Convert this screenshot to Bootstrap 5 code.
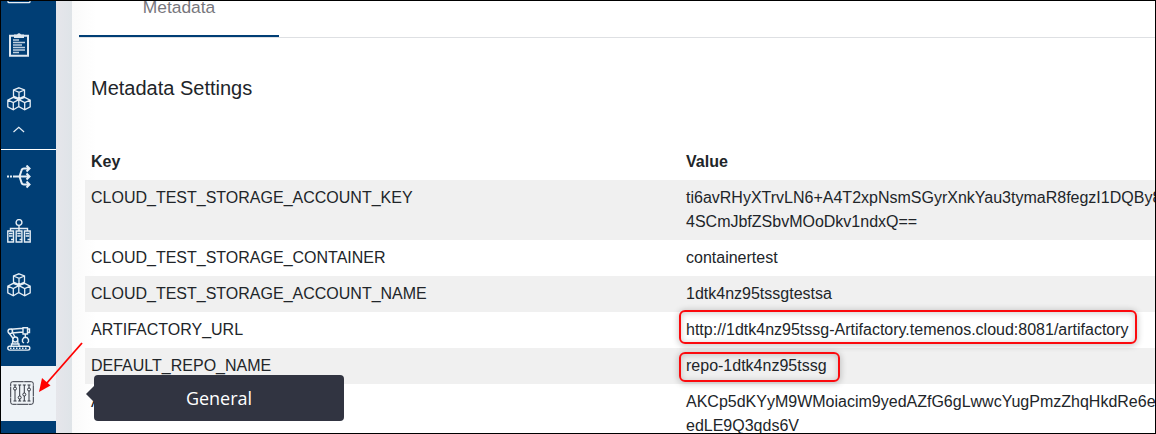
<!DOCTYPE html>
<html lang="en">
<head>
<meta charset="utf-8">
<title>Metadata Settings</title>
<link href="https://cdn.jsdelivr.net/npm/bootstrap@5.3.0/dist/css/bootstrap.min.css" rel="stylesheet">
<style>
body{font-family:"Liberation Sans",Arial,sans-serif;font-size:16px;color:#212529;background:#fff}
.app-frame{width:1156px;height:434px;border:1px solid #000}
.side-bar{width:55px;background:#003e75;color:#e6eef5}
.side-bar svg{display:block;fill:none;stroke:currentColor;margin-left:6px}
.side-item{height:54px;flex:none}
.side-item.cut{height:17px;align-items:flex-start!important}
.side-caret{height:23px;flex:none}
.side-rule{height:1px;background:#fff;flex:none}
.side-item.current{height:55px;background:#eff3f7;color:#333640}
.side-item.current svg{margin:-2px 0 0 9px}
.gutter{width:16px;background:linear-gradient(90deg,#e6e6eb,#dfe4e8)}
.main-pane{min-width:0;padding-left:7px;background:linear-gradient(90deg,#fafafa,#fff 24px)}
.tab-strip{height:37px;border-bottom:1px solid #dee0e3;flex:none}
.tab-on{width:200px;height:36px;border-bottom:2px solid #003e75;color:#77777d;font-size:17.4px;line-height:13px}
.pane-body{padding-left:6px}
.pane-title{font-size:20px;line-height:24px;font-weight:400;margin:0 0 0 6px;padding-top:38px}
.kv-table{width:1190px;table-layout:fixed;margin-top:44px;--bs-table-striped-bg:#f0f0f0}
.kv-table>:not(caption)>*>*{padding:6px;border:0;line-height:24px;color:#212529!important}
.kv-table td{white-space:nowrap}
.marked{border:2px solid #fb0a0e;border-radius:6px;box-shadow:0 1px 6px 1px #0003,inset 0 1px 6px #0003;left:-7px}
.mark-url{top:-8px;height:34px;right:-8px}
.mark-repo{top:-2px;height:30px;right:-13px}
.tip{left:93px;top:374px;width:250px;height:46px;background:#313441;color:#fff;font:18px/46px "Open Sans","Noto Sans",sans-serif;border-radius:4px;z-index:3}
.tip:before{content:"";position:absolute;left:-8px;top:11px;border:8px solid transparent;border-right-color:#313441;border-left:0}
.pointer-arrow{left:0;top:0;z-index:4;pointer-events:none}
</style>
</head>
<body class="overflow-hidden">
<svg class="d-none">
<symbol id="cubes" viewBox="0 0 24 24"><path d="M12 .8 17.500 3v6L12 11.500 6.500 9V3ZM6.500 3 12 5.300 17.500 3M12 5.300v6M6.300 10.300 11.800 12.700v6.800L6.300 22.800.8 19.800v-6.700ZM.8 13.100l5.500 2.400 5.500-2.800M6.300 15.500v7M17.700 10.300l5.500 2.800v6.700l-5.500 3-5.900-3.300v-6.800ZM11.800 12.700l5.900 2.800 5.500-2.400M17.700 15.500v7"/></symbol>
</svg>
<div class="app-frame d-flex overflow-hidden position-relative">
  <nav class="side-bar d-flex flex-column flex-shrink-0">
    <div class="side-item cut d-flex"><svg width="24" height="3" stroke-width="1.200"><path d="M1 0v1q0 .6 1 .6h20q1 0 1-.6V0"/></svg></div>
    <div class="side-item d-flex align-items-center"><svg width="24" height="24" viewBox="0 0 24 24"><path stroke="#dfe8f0" stroke-width="2" d="M3 2.800h18v20H3Z"/><path fill="#dfe8f0" stroke="none" d="M7 1.500h3q2-2.500 4 0h3V5H7Z"/><path stroke="#bfd0df" stroke-width="1.300" d="M6 7h6M6 9.500h12M6 12h9M6 14.500h12M6 17h12M6 19.500h6"/></svg></div>
    <div class="side-item d-flex align-items-center"><svg width="24" height="24" stroke-width="1.300"><use href="#cubes"/></svg></div>
    <div class="side-caret"><svg width="24" height="8" stroke-width="1.200"><path d="m6.500 6 5.300-4.700L17.100 6"/></svg></div>
    <div class="side-rule"></div>
    <div class="side-item d-flex align-items-center"><svg width="24" height="24" viewBox="0 0 24 24" stroke="#fff" stroke-width="2"><path d="M0 11.500h2M3 11.500h2M6 11.500h16M22 3.500h-5q-2 0-2.500 2l-2 6 2 6q.5 2 2.500 2h5M19.500 .5 22.500 3.500 19.500 6.500M19.500 8.500l3 3-3 3M19.500 16.500l3 3-3 3"/></svg></div>
    <div class="side-item d-flex align-items-center"><svg width="24" height="24" viewBox="0 0 24 24" stroke-width="1.400"><circle cx="12" cy="3.500" r="2.900"/><path d="M12 6.500V12M3.500 12V9.500h17V12M.8 12h5.700v11H.8ZM9.200 12h5.700v11H9.200ZM17.500 12h5.700v11h-5.700ZM2 14.500h3.500M2 17h3.500M10.300 14.500h3.500M10.300 17h3.500M18.700 14.500h3.500M18.700 17h3.500M4 20.500h2M12.500 20.500h2M20.500 20.500h2"/></svg></div>
    <div class="side-item d-flex align-items-center"><svg width="24" height="24" stroke-width="1.300"><use href="#cubes"/></svg></div>
    <div class="side-item d-flex align-items-center"><svg width="24" height="24" viewBox="0 0 24 24" stroke-width="1.400"><rect x=".8" y="19.300" width="22" height="3.800" rx="1.800"/><path stroke-dasharray="1.500 1.500" d="M3 21.200h18"/><path d="M4.500 19v-2h7.500v2M5.500 17l.2-4M11 17l-.3-3.500M2 6 6.500 12M5 4.500 8 10M4 2.300l12-1M5 6l11-1M16 .8h4.500V7H16ZM20.500 2h2v3.500h-2M18.300 7v3.500M15.500 15v-2.500l1.500-2h3l1.500 2V15M15.500 15l1.500 1M21.500 15 20 16"/><circle cx="3.300" cy="4.300" r="2.300"/><circle cx="8.300" cy="12.500" r="2.500"/></svg></div>
    <div class="side-item current d-flex align-items-center"><svg width="24" height="24" viewBox="0 0 24 24" stroke-width="1"><rect x=".7" y=".7" width="22.600" height="22.600" rx="2" stroke-dasharray="11 .5"/><path d="M5 4v2M5 9v11M9.700 4v11M9.700 18v2M14.300 4v8M14.300 15v5M19 4v3M19 10v10M3.500 4h3M8.200 4h3M12.800 4h3M17.500 4h3M3.500 20h3M8.200 20h3M12.800 20h3M17.500 20h3"/><circle cx="5" cy="7.600" r="1.500"/><circle cx="9.700" cy="16.500" r="1.500"/><circle cx="14.300" cy="13.500" r="1.500"/><circle cx="19" cy="8.500" r="1.500"/></svg></div>
  </nav>
  <div class="gutter flex-shrink-0"></div>
  <main class="main-pane flex-grow-1 overflow-hidden">
    <div class="tab-strip"><div class="tab-on text-center">Metadata</div></div>
    <div class="pane-body">
      <h5 class="pane-title">Metadata Settings</h5>
      <table class="table table-striped kv-table mb-0">
        <colgroup><col style="width:595px"><col></colgroup>
        <thead><tr><th>Key</th><th>Value</th></tr></thead>
        <tbody>
          <tr><td>CLOUD_TEST_STORAGE_ACCOUNT_KEY</td><td>ti6avRHyXTrvLN6+A4T2xpNsmSGyrXnkYau3tymaR8fegzI1DQBy8<br>4SCmJbfZSbvMOoDkv1ndxQ==</td></tr>
          <tr><td>CLOUD_TEST_STORAGE_CONTAINER</td><td>containertest</td></tr>
          <tr><td>CLOUD_TEST_STORAGE_ACCOUNT_NAME</td><td>1dtk4nz95tssgtestsa</td></tr>
          <tr><td>ARTIFACTORY_URL</td><td><span class="position-relative d-inline-block">http://1dtk4nz95tssg-Artifactory.temenos.cloud:8081/artifactory<i class="marked mark-url position-absolute"></i></span></td></tr>
          <tr><td>DEFAULT_REPO_NAME</td><td><span class="position-relative d-inline-block">repo-1dtk4nz95tssg<i class="marked mark-repo position-absolute"></i></span></td></tr>
          <tr><td>A</td><td>AKCp5dKYyM9WMoiacim9yedAZfG6gLwwcYugPmzZhqHkdRe6e<br>edLE9Q3qds6V</td></tr>
        </tbody>
      </table>
    </div>
  </main>
  <div class="tip position-absolute text-center">General</div>
  <svg class="pointer-arrow position-absolute" width="100" height="432"><path d="M81 342 45 383" stroke="#f00" stroke-width="1.800"/><path d="m38 391 3-14 8.500 7.500Z" fill="#f00"/></svg>
</div>
<script src="https://cdn.jsdelivr.net/npm/bootstrap@5.3.0/dist/js/bootstrap.bundle.min.js"></script>
</body>
</html>
